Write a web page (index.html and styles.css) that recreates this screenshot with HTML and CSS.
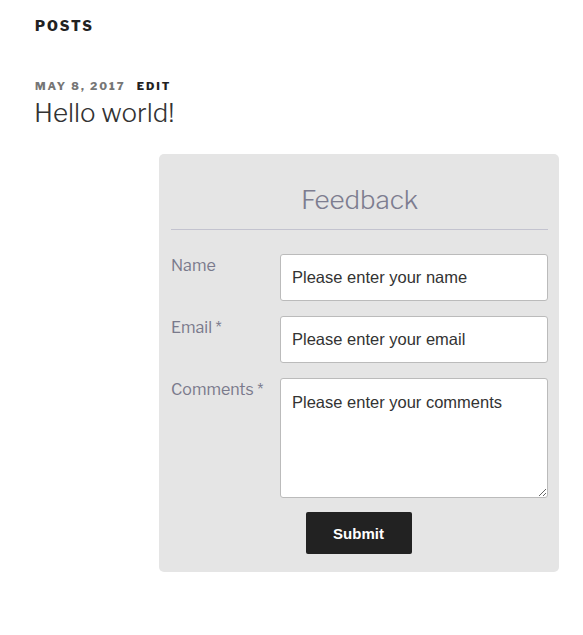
FILE: index.html
```html
<!DOCTYPE html>
<html lang="en">
<head>
<meta charset="utf-8">
<title>Posts</title>
<link rel="stylesheet" href="styles.css">
</head>
<body>
<main class="page">
  <h1 class="page-title">Posts</h1>
  <article class="post">
    <div class="entry-meta"><span class="date">May 8, 2017</span><a class="edit" href="#">Edit</a></div>
    <h2 class="entry-title">Hello world!</h2>
    <form class="card">
      <h3 class="card-title">Feedback</h3>
      <hr class="rule">
      <div class="row">
        <label class="label" for="n">Name</label>
        <input class="field" id="n" type="text" placeholder="Please enter your name">
      </div>
      <div class="row">
        <label class="label" for="e">Email *</label>
        <input class="field" id="e" type="text" placeholder="Please enter your email">
      </div>
      <div class="row last">
        <label class="label" for="c">Comments *</label>
        <textarea class="field area" id="c" placeholder="Please enter your comments"></textarea>
      </div>
      <div class="actions">
        <button class="submit" type="button">Submit</button>
      </div>
    </form>
  </article>
</main>
</body>
</html>
```

FILE: styles.css
```css
html, body {
  margin: 0;
  padding: 0;
  background: #fff;
}
body {
  font-family: "Libre Franklin", "Noto Sans", "Liberation Sans", sans-serif;
  color: #333;
}
.page {
  padding: 16px 25px 40px 35px;
}
.page-title {
  margin: 0;
  font-size: 14px;
  font-weight: 800;
  letter-spacing: 0.14em;
  text-transform: uppercase;
  color: #222;
  line-height: 20px;
}
.post {
  margin-top: 42px;
}
.entry-meta {
  font-size: 11px;
  font-weight: 800;
  letter-spacing: 0.18em;
  text-transform: uppercase;
  line-height: 16px;
  color: #767676;
}
.entry-meta .edit {
  color: #222;
  text-decoration: none;
  margin-left: 11px;
}
.entry-title {
  margin: 3px 0 0 -1px;
  font-size: 26px;
  font-weight: 300;
  line-height: 32px;
  color: #333;
}
.card {
  margin: 25px 0 0 124px;
  width: 400px;
  box-sizing: border-box;
  background: #e5e5e5;
  border-radius: 5px;
  padding: 15px 11px 18px 12px;
  display: flex;
  flex-direction: column;
}
.card-title {
  margin: 15px 0 0;
  text-align: center;
  font-size: 26px;
  font-weight: 300;
  line-height: 32px;
  color: #7d7d90;
}
.rule {
  margin: 13px 0 24px;
  border: 0;
  border-top: 1px solid #c3c3cf;
  height: 0;
}
.row {
  display: flex;
  margin-bottom: 15px;
}
.row.last {
  margin-bottom: 14px;
}
.label {
  width: 109px;
  flex: none;
  font-size: 16px;
  line-height: 24px;
  margin-top: 0;
  color: #7a7a8c;
}
.field {
  flex: 1;
  box-sizing: border-box;
  height: 47px;
  margin: 0;
  border: 1px solid #bbb;
  border-radius: 3px;
  background: #fff;
  padding: 0 11px;
  font-family: "Liberation Sans", Arial, sans-serif;
  font-size: 16.5px;
  color: #333;
  outline: none;
}
.field::placeholder {
  color: #333;
  opacity: 1;
}
.area {
  height: 120px;
  padding: 13px 11px;
  line-height: 20px;
  resize: vertical;
}
.actions {
  display: flex;
  justify-content: center;
}
.submit {
  width: 106px;
  height: 42px;
  margin-right: 2px;
  border: 0;
  border-radius: 2px;
  background: #222;
  color: #fff;
  font-family: "Liberation Sans", Arial, sans-serif;
  font-weight: 700;
  font-size: 15px;
  padding: 0;
  cursor: pointer;
}
```
